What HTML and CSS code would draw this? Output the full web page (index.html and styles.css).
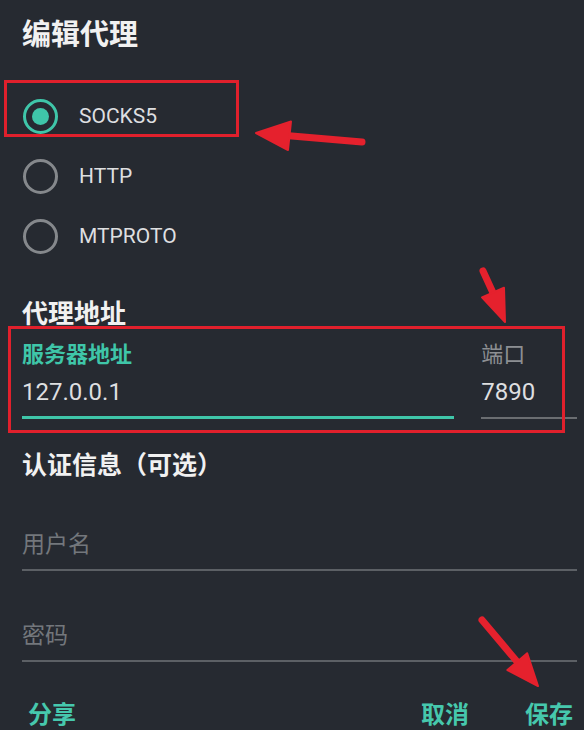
FILE: index.html
```html
<!DOCTYPE html>
<html lang="zh-CN">
<head>
<meta charset="utf-8">
<title>编辑代理</title>
<link rel="stylesheet" href="styles.css">
</head>
<body>
<div class="dialog">
  <h1 class="title">编辑代理</h1>
  <div class="radios">
    <div class="radio-row"><span class="radio checked"></span><span class="radio-label">SOCKS5</span></div>
    <div class="radio-row"><span class="radio"></span><span class="radio-label">HTTP</span></div>
    <div class="radio-row"><span class="radio"></span><span class="radio-label">MTPROTO</span></div>
  </div>
  <h2 class="section">代理地址</h2>
  <div class="addr-row">
    <div class="field server">
      <div class="field-label active">服务器地址</div>
      <div class="field-value focused">127.0.0.1</div>
    </div>
    <div class="field port">
      <div class="field-label">端口</div>
      <div class="field-value">7890</div>
    </div>
  </div>
  <h2 class="section auth">认证信息（可选）</h2>
  <div class="input user">用户名</div>
  <div class="input pass">密码</div>
  <div class="actions">
    <span class="btn">分享</span>
    <span class="spacer"></span>
    <span class="btn">取消</span>
    <span class="btn">保存</span>
  </div>
</div>
<div class="mark mark-socks"></div>
<div class="mark mark-addr"></div>
<svg class="arrows" width="584" height="730" viewBox="0 0 584 730">
  <g stroke="#e5212d" stroke-width="7" stroke-linecap="round" fill="#e5212d">
    <line x1="362" y1="142" x2="286" y2="135.5"/>
    <line x1="483" y1="271" x2="494" y2="295"/>
    <line x1="482" y1="620" x2="519" y2="664"/>
  </g>
  <g fill="#e5212d" stroke="#e5212d" stroke-width="2" stroke-linejoin="round">
    <polygon points="256,133 291,121.5 288,150"/>
    <polygon points="505,322 504,287.7 482,297.3"/>
    <polygon points="538,686 527.2,653.2 507.4,670"/>
  </g>
</svg>
</body>
</html>
```
FILE: styles.css
```css
html, body {
  margin: 0;
  padding: 0;
  background: #262a31;
}
body {
  width: 584px;
  height: 730px;
  overflow: hidden;
  position: relative;
  font-family: Roboto, "Noto Sans CJK SC", sans-serif;
  color: #e6e7e8;
}
.dialog {
  padding: 19px 7px 0 22px;
  display: flex;
  flex-direction: column;
}
.title {
  margin: 0;
  font-size: 29px;
  line-height: 32px;
  font-weight: 700;
  color: #f1f1f1;
}
.radios {
  margin-top: 35px;
  display: flex;
  flex-direction: column;
}
.radio-row {
  height: 60px;
  display: flex;
  align-items: center;
  gap: 21px;
}
.radio {
  box-sizing: border-box;
  width: 35px;
  height: 35px;
  margin-left: 1px;
  border: 3px solid #85888c;
  border-radius: 50%;
  display: flex;
  align-items: center;
  justify-content: center;
}
.radio.checked {
  border-color: #3fc6a9;
}
.radio.checked::after {
  content: "";
  width: 17px;
  height: 17px;
  border-radius: 50%;
  background: #3fc6a9;
}
.radio-label {
  font-size: 21px;
  color: #dedfe0;
}
.section {
  margin: 33px 0 0;
  font-size: 26px;
  line-height: 30px;
  font-weight: 700;
  color: #f1f1f1;
}
.addr-row {
  margin-top: 13px;
  display: flex;
  gap: 27px;
}
.field.server { width: 433px; }
.field.port { width: 96px; }
.field-label {
  font-size: 22px;
  line-height: 26px;
  color: #8c8f93;
}
.field-label.active {
  color: #3fc6a9;
  font-weight: 700;
}
.field-value {
  margin-top: 8px;
  font-size: 24px;
  line-height: 32px;
  padding-bottom: 9px;
  color: #dedfe0;
  border-bottom: 2px solid #6a6d71;
}
.field-value.focused {
  border-bottom: 3px solid #3fc6a9;
  padding-bottom: 8px;
}
.section.auth {
  margin-top: 32px;
  font-size: 25px;
}
.input {
  font-size: 23px;
  line-height: 30px;
  color: #73777c;
  padding-bottom: 9px;
  border-bottom: 2px solid #5c6065;
}
.input.user { margin-top: 49px; }
.input.pass { margin-top: 50px; }
.actions {
  margin-top: 39px;
  padding: 0 4px 0 6px;
  display: flex;
  gap: 56px;
}
.spacer { flex: 1; }
.btn {
  font-size: 24px;
  line-height: 28px;
  font-weight: 700;
  color: #46c8ad;
}
.actions .spacer + .btn { margin-left: -56px; }
.mark {
  position: absolute;
  box-sizing: border-box;
  border: 3px solid #e0202c;
}
.mark-socks {
  left: 4px;
  top: 80px;
  width: 235px;
  height: 57px;
}
.mark-addr {
  left: 8px;
  top: 326px;
  width: 557px;
  height: 107px;
}
.arrows {
  position: absolute;
  left: 0;
  top: 0;
}
```
